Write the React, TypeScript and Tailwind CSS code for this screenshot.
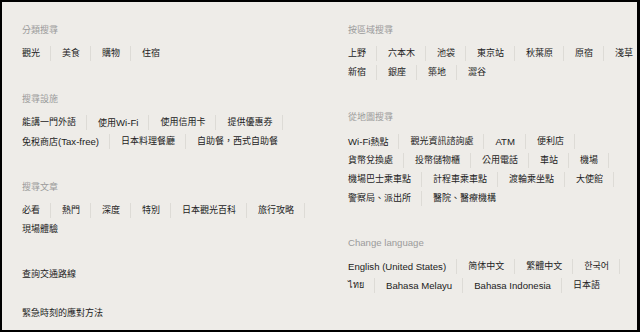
const font = "font-['Liberation_Sans','Noto_Sans_CJK_TC',sans-serif]";

type Rows = string[][];

// latin runs are set a touch larger so they get the width of the reference's Helvetica
function Label({ text, className }: { text: string; className: string }) {
  const runs = text.match(/[\x20-\x7E]+|[^\x20-\x7E]+/g) ?? [];
  return (
    <span className={className}>
      {runs.map((r, i) =>
        /^[\x20-\x7E]+$/.test(r) ? (
          <span key={i} className="text-[9.6px]">
            {r}
          </span>
        ) : (
          <span key={i}>{r}</span>
        )
      )}
    </span>
  );
}

function LinkRows({ rows, className }: { rows: Rows; className: string }) {
  const total = rows.reduce((n, r) => n + r.length, 0);
  let idx = 0;
  return (
    <div className={className}>
      {rows.map((row, ri) => (
        <ul key={ri} className="flex h-[19px] items-center whitespace-nowrap text-[9px]">
          {row.map((item) => {
            idx += 1;
            const last = idx === total;
            return (
              <li key={item} className="flex h-[19px] items-center">
                <Label text={item} className="text-[9px] leading-[19px] text-[#222]" />
                {!last && <span className="ml-[10px] mr-[11px] h-[15px] w-px bg-[#dddbd6]" />}
              </li>
            );
          })}
        </ul>
      ))}
    </div>
  );
}

function Section({
  title,
  rows,
  className = "",
  listGap = "mt-[7px]",
}: {
  title: string;
  rows: Rows;
  className?: string;
  listGap?: string;
}) {
  return (
    <section className={className}>
      <h3 className="h-[14px] text-[9px] leading-[14px] text-[#9b9b9b]">
        <Label text={title} className="" />
      </h3>
      <LinkRows rows={rows} className={listGap} />
    </section>
  );
}

export default function App() {
  return (
    <div
      className={`h-[332px] w-[640px] overflow-hidden border-t-2 border-b-2 border-l-2 border-r-[3px] border-black bg-[#eeece8] ${font}`}
    >
      <div className="flex pl-[20px] pt-[21px]">
        <div className="w-[326px] shrink-0">
          <Section title="分類搜尋" rows={[["觀光", "美食", "購物", "住宿"]]} />
          <Section
            className="mt-[29px]"
            title="搜尋設施"
            rows={[
              ["能講一門外語", "使用Wi-Fi", "使用信用卡", "提供優惠券"],
              ["免稅商店(Tax-free)", "日本料理餐廳", "自助餐，西式自助餐"],
            ]}
          />
          <Section
            className="mt-[29px]"
            title="搜尋文章"
            rows={[
              ["必看", "熱門", "深度", "特別", "日本觀光百科", "旅行攻略"],
              ["現場體驗"],
            ]}
          />
          <a className="mt-[28px] block h-[14px] text-[9px] leading-[14px] text-[#222]">查詢交通路線</a>
          <a className="mt-[25px] block h-[14px] text-[9px] leading-[14px] text-[#222]">緊急時刻的應對方法</a>
        </div>

        <div className="w-[310px] shrink-0">
          <Section
            title="按區域搜尋"
            rows={[
              ["上野", "六本木", "池袋", "東京站", "秋葉原", "原宿", "淺草"],
              ["新宿", "銀座", "築地", "澀谷"],
            ]}
          />
          <Section
            className="mt-[28px]"
            listGap="mt-[8px]"
            title="從地圖搜尋"
            rows={[
              ["Wi-Fi熱點", "觀光資訊諮詢處", "ATM", "便利店"],
              ["貨幣兌換處", "投幣儲物櫃", "公用電話", "車站", "機場"],
              ["機場巴士乘車點", "計程車乘車點", "渡輪乘坐點", "大使館"],
              ["警察局、派出所", "醫院、醫療機構"],
            ]}
          />
          <Section
            className="mt-[28px]"
            title="Change language"
            rows={[
              ["English (United States)", "简体中文", "繁體中文", "한국어"],
              ["ไทย", "Bahasa Melayu", "Bahasa Indonesia", "日本語"],
            ]}
          />
        </div>
      </div>
    </div>
  );
}
